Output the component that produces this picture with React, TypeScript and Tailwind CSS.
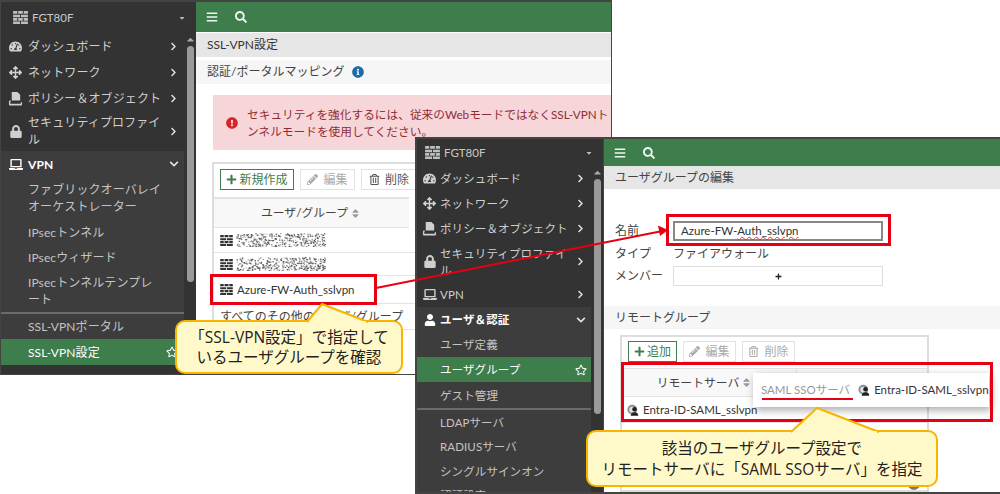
import React from "react";
import {
  FaTachometerAlt, FaArrowsAlt, FaLock, FaLaptop, FaUser, FaBars, FaSearch, FaInfoCircle,
  FaExclamationCircle, FaPlus, FaPencilAlt, FaRegTrashAlt, FaRegStar, FaChevronRight,
  FaChevronDown, FaSort, FaCaretDown, FaCaretUp,
} from "react-icons/fa";

const FONT = "font-['Lato','Noto_Sans_CJK_JP',sans-serif]";

function Wall({ className = "" }: { className?: string }) {
  return (
    <svg viewBox="0 0 16 14" className={className} fill="currentColor">
      <path d="M0 0h4.500v3H0zM5.500 0h5v3h-5zM11.500 0H16v3h-4.500zM0 4h7.500v2.600H0zM8.500 4H16v2.600H8.500zM0 7.600h4.500v2.800H0zM5.500 7.600h5v2.800h-5zM11.500 7.600H16v2.800h-4.500zM0 11.400h7.500V14H0zM8.500 11.400H16V14H8.500z" />
    </svg>
  );
}

function Policy({ className = "" }: { className?: string }) {
  return (
    <svg viewBox="0 0 16 16" className={className} fill="currentColor">
      <path d="M4 1h6l3 3v6H4z" />
      <path d="M1 11.500c0-1 .6-1.500 1.500-1.500H3v1.400h-.6v2.200h11.200V12H15v2c0 1-.6 1.500-1.500 1.500h-11C1.600 15.500 1 15 1 14z" />
    </svg>
  );
}

function RemoteServer({ className = "" }: { className?: string }) {
  return (
    <svg viewBox="0 0 16 16" className={className}>
      <circle cx="7" cy="7.500" r="6.500" fill="#8a8f94" />
      <circle cx="7" cy="7.500" r="4" fill="#dfe3e6" />
      <circle cx="10" cy="7" r="3" fill="#222" />
      <path d="M5 15.500c0-3 2-4.500 5-4.500s5 1.500 5 4.500z" fill="#222" />
    </svg>
  );
}

function Scramble({ seed }: { seed: number }) {
  const dots: React.ReactNode[] = [];
  let v = seed;
  for (let i = 0; i < 330; i++) {
    v = (v * 9301 + 49297) % 233280;
    const x = (v / 233280) * 90;
    v = (v * 9301 + 49297) % 233280;
    const y = (v / 233280) * 14;
    v = (v * 9301 + 49297) % 233280;
    const o = 0.3 + (v / 233280) * 0.7;
    dots.push(<rect key={i} x={x} y={y} width="1.400" height="1.200" fill="#444" opacity={o} />);
  }
  return (
    <svg viewBox="0 0 90 14" className="w-[90px] h-[14px]">
      {dots}
    </svg>
  );
}

type Item = {
  icon?: React.ReactNode;
  lines: string[];
  chev?: "r" | "d";
  active?: boolean;
  green?: boolean;
  star?: boolean;
  h: number;
  sep?: boolean;
  sub?: boolean;
};

function NavRow({ it, small, colW, starMr }: { it: Item; small: boolean; colW: number; starMr: number }) {
  const bg = it.green ? "bg-[#3e7d4c]" : it.sub || it.active ? "bg-[#3d3d3d]" : "";
  const color = it.green || it.active ? "text-white" : it.sub ? "text-[#c4c4c4]" : "text-[#cfcfcf]";
  return (
    <div
      className={`flex items-center shrink-0 ${bg} ${color} ${it.sep ? "border-t-2 border-[#6b6b6b]" : ""}`}
      style={{ height: it.h }}
    >
      <div className="flex justify-center items-center shrink-0 pl-[2px]" style={{ width: colW }}>
        {it.icon}
      </div>
      <div
        className={`flex-1 ${small ? "text-[11.5px]" : "text-[12px]"} leading-[17px] tracking-[0.1px] whitespace-nowrap ${it.active ? "font-bold" : ""}`}
      >
        {it.lines.map((l) => (
          <div key={l}>{l}</div>
        ))}
      </div>
      {it.chev === "r" && <FaChevronRight className="w-[9px] h-[9px] mr-[6px] text-[#e4e4e4]" />}
      {it.chev === "d" && <FaChevronDown className="w-[10px] h-[10px] mr-[5px] text-[#e4e4e4]" />}
      {it.star && <FaRegStar className="w-[12px] h-[12px] text-white" style={{ marginRight: starMr }} />}
    </div>
  );
}

function Sidebar({
  items, width, listW, headH, thumbH, small, colW, starMr, headPl,
}: {
  items: Item[]; width: number; listW: number; headH: number; thumbH: number; small: boolean;
  colW: number; starMr: number; headPl: number;
}) {
  return (
    <div className="bg-[#333333] flex flex-col shrink-0 h-full overflow-hidden" style={{ width }}>
      <div className="flex items-center shrink-0 pr-[10px] text-[#c9c9c9]" style={{ height: headH, paddingLeft: headPl }}>
        <Wall className="w-[15px] h-[13px] text-[#bdbdbd]" />
        <span className="ml-[4px] text-[11.5px] flex-1">FGT80F</span>
        <FaCaretDown className="w-[8px] h-[8px] text-[#bbb]" />
      </div>
      <div className="flex flex-1 min-h-0">
        <div className="flex flex-col shrink-0 overflow-hidden" style={{ width: listW }}>
          {items.map((it) => (
            <NavRow key={it.lines[0]} it={it} small={small} colW={colW} starMr={starMr} />
          ))}
        </div>
        <div className="flex-1 flex flex-col items-center">
          <FaCaretUp className="w-[11px] h-[11px] text-[#a8a8a8] mt-[1px]" />
          <div className="w-[7px] rounded-[4px] bg-[#9a9a9a] mt-[1px]" style={{ height: thumbH }} />
        </div>
      </div>
    </div>
  );
}

function ToolBtn({ icon, label, green, w, dim }: { icon: React.ReactNode; label: string; green?: boolean; w: number; dim?: boolean }) {
  return (
    <div
      className={`h-[21px] flex items-center justify-center gap-[2px] text-[12px] border ${
        green ? "border-[#3e7d4c] text-[#3e7d4c]" : "border-[#e2e2e2]"
      } ${dim ? "text-[#aaa]" : green ? "" : "text-[#555]"}`}
      style={{ width: w }}
    >
      {icon}
      <span className={green ? "" : "ml-[3px]"}>{label}</span>
    </div>
  );
}

const small = "w-[11px] h-[11px]";

const nav1: Item[] = [
  { icon: <FaTachometerAlt className="w-[13px] h-[13px]" />, lines: ["ダッシュボード"], chev: "r", h: 26 },
  { icon: <FaArrowsAlt className="w-[13px] h-[13px]" />, lines: ["ネットワーク"], chev: "r", h: 26 },
  { icon: <Policy className="w-[15px] h-[15px]" />, lines: ["ポリシー＆オブジェクト"], chev: "r", h: 26 },
  { icon: <FaLock className="w-[12px] h-[13px]" />, lines: ["セキュリティプロファイ", "ル"], chev: "r", h: 40 },
  { icon: <FaLaptop className="w-[14px] h-[13px]" />, lines: ["VPN"], chev: "d", active: true, h: 26 },
  { lines: ["ファブリックオーバレイ", "オーケストレーター"], sub: true, h: 42 },
  { lines: ["IPsecトンネル"], sub: true, h: 26 },
  { lines: ["IPsecウィザード"], sub: true, h: 25 },
  { lines: ["IPsecトンネルテンプレ", "ート"], sub: true, h: 42 },
  { lines: ["SSL-VPNポータル"], sub: true, sep: true, h: 27 },
  { lines: ["SSL-VPN設定"], green: true, star: true, h: 26 },
];

const nav2: Item[] = [
  { icon: <FaTachometerAlt className="w-[13px] h-[13px]" />, lines: ["ダッシュボード"], chev: "r", h: 25 },
  { icon: <FaArrowsAlt className="w-[13px] h-[13px]" />, lines: ["ネットワーク"], chev: "r", h: 25 },
  { icon: <Policy className="w-[15px] h-[15px]" />, lines: ["ポリシー＆オブジェクト"], chev: "r", h: 25 },
  { icon: <FaLock className="w-[12px] h-[13px]" />, lines: ["セキュリティプロファイ", "ル"], chev: "r", h: 41 },
  { icon: <FaLaptop className="w-[14px] h-[13px]" />, lines: ["VPN"], chev: "r", h: 25 },
  { icon: <FaUser className="w-[12px] h-[12px]" />, lines: ["ユーザ＆認証"], chev: "d", active: true, h: 25 },
  { lines: ["ユーザ定義"], sub: true, h: 25 },
  { lines: ["ユーザグループ"], green: true, star: true, h: 25 },
  { lines: ["ゲスト管理"], sub: true, h: 26 },
  { lines: ["LDAPサーバ"], sub: true, sep: true, h: 26 },
  { lines: ["RADIUSサーバ"], sub: true, h: 25 },
  { lines: ["シングルサインオン"], sub: true, h: 25 },
  { lines: ["認証設定"], sub: true, h: 22 },
];

function GreenBar({ h }: { h: number }) {
  return (
    <div className="bg-[#3e7d4c] shrink-0 flex items-center pl-[10px] gap-[17px] text-[#eef5ef]" style={{ height: h }}>
      <FaBars className="w-[12px] h-[12px]" />
      <FaSearch className="w-[12px] h-[12px]" />
    </div>
  );
}

function Window1() {
  return (
    <div className="absolute left-0 top-0 w-[612px] h-[375px] border-t-2 border-r border-b border-l border-[#444] flex overflow-hidden bg-white">
      <Sidebar items={nav1} width={195} listW={183} headH={31} thumbH={236} small={false} colW={27} starMr={6} headPl={12} />
      <div className="flex-1 flex flex-col min-w-0">
        <GreenBar h={30} />
        <div className="h-[24px] mt-[1px] shrink-0 bg-[#e6e6e6] flex items-center pl-[11px] text-[12px] text-[#333]">SSL-VPN設定</div>
        <div className="h-[24px] mt-[3px] shrink-0 bg-[#f6f6f6] flex items-center pl-[11px] text-[12px] text-[#444]">
          認証/ポータルマッピング
          <FaInfoCircle className="w-[12px] h-[12px] ml-[8px] text-[#1c6aa8]" />
        </div>
        <div className="ml-[17px] mt-[11px] h-[55px] shrink-0 bg-[#f7d6da] flex items-center text-[#8f2c37]">
          <FaExclamationCircle className="w-[12px] h-[12px] ml-[13px] text-[#d8232a] shrink-0" />
          <div className="ml-[9px] text-[11.7px] leading-[16.500px] whitespace-nowrap">
            <div>セキュリティを強化するには、従来のWebモードではなくSSL-VPNト</div>
            <div>ンネルモードを使用してください。</div>
          </div>
        </div>
        <div className="ml-[16px] mt-[12px] flex-1 border-2 border-[#ddd] border-b-0 flex flex-col">
          <div className="flex gap-[6px] pl-[6px] pt-[5px] h-[33px] shrink-0 items-start">
            <ToolBtn w={74} green icon={<FaPlus className={small} />} label="新規作成" />
            <ToolBtn w={55} dim icon={<FaPencilAlt className={small} />} label="編集" />
            <ToolBtn w={56} icon={<FaRegTrashAlt className={small} />} label="削除" />
          </div>
          <div className="h-[31px] shrink-0 border-t-2 border-b border-[#e3e3e3] bg-[#f8f8f8] flex items-center justify-center pr-[2px] text-[11.8px] text-[#444] gap-[3px] w-[195px]">
            ユーザ/グループ
            <FaSort className="w-[9px] h-[11px] text-[#999]" />
          </div>
          <div className="h-[25px] shrink-0 border-b border-[#e3e3e3] flex items-center pl-[6px] gap-[3px]">
            <Wall className="w-[13px] h-[11px] text-[#333]" />
            <Scramble seed={17} />
          </div>
          <div className="h-[23px] shrink-0 border-b border-[#e3e3e3] flex items-center pl-[6px] gap-[3px]">
            <Wall className="w-[13px] h-[11px] text-[#333]" />
            <Scramble seed={921} />
          </div>
          <div className="h-[28px] shrink-0 border-b border-[#e3e3e3] flex items-center pl-[6px] gap-[4px] text-[11.5px] text-[#333]">
            <Wall className="w-[13px] h-[11px] text-[#333]" />
            Azure-FW-Auth_sslvpn
          </div>
          <div className="h-[26px] shrink-0 border-b border-[#e3e3e3] flex items-center pl-[6px] text-[12px] text-[#444]">
            すべてのその他のユーザ/グループ
          </div>
        </div>
      </div>
    </div>
  );
}

function Window2() {
  return (
    <div className="absolute left-[415px] top-[137px] w-[586px] h-[357px] border-t-2 border-l-2 border-b-2 border-[#444] flex overflow-hidden bg-white">
      <Sidebar items={nav2} width={186} listW={174} headH={27} thumbH={235} small colW={23} starMr={4} headPl={8} />
      <div className="flex-1 flex flex-col min-w-0 border-l border-[#444]">
        <GreenBar h={27} />
        <div className="h-[23px] shrink-0 bg-[#e6e6e6] flex items-center pl-[11px] text-[12px] text-[#444]">ユーザグループの編集</div>
        <div className="flex flex-col pl-[11px] mt-[32px] gap-[2px] text-[12px] text-[#444]">
          <div className="flex items-center h-[20px]">
            <span className="w-[58px]">名前</span>
            <div className="w-[210px] h-[20px] border-2 border-[#888] flex items-center pl-[6px] text-[11.5px] text-[#333]">
              Azure-FW-
              <span className="underline decoration-wavy decoration-[#e33] decoration-1">Auth_sslvpn</span>
            </div>
          </div>
          <div className="flex items-center h-[21px]">
            <span className="w-[58px]">タイプ</span>
            <span>ファイアウォール</span>
          </div>
          <div className="flex items-center h-[20px]">
            <span className="w-[58px]">メンバー</span>
            <div className="w-[210px] h-[20px] border border-[#ddd] flex items-center justify-center">
              <FaPlus className="w-[7px] h-[7px] text-[#222]" />
            </div>
          </div>
        </div>
        <div className="h-[23px] mt-[20px] shrink-0 bg-[#f6f6f6] flex items-center pl-[11px] text-[12px] text-[#444]">リモートグループ</div>
        <div className="ml-[16px] mt-[6px] w-[309px] flex-1 border-2 border-[#ddd] flex flex-col">
          <div className="flex gap-[6px] pl-[6px] pt-[4px] h-[31px] shrink-0 items-start">
            <ToolBtn w={49} green icon={<FaPlus className={small} />} label="追加" />
            <ToolBtn w={53} dim icon={<FaPencilAlt className={small} />} label="編集" />
            <ToolBtn w={53} dim icon={<FaRegTrashAlt className={small} />} label="削除" />
          </div>
          <div className="h-[29px] shrink-0 border-t border-b border-[#e3e3e3] bg-[#f8f8f8] flex">
            <div className="w-[175px] border-r border-[#e3e3e3] flex items-center justify-center gap-[3px] pr-[10px] text-[11.8px] text-[#444]">
              リモートサーバ
              <FaSort className="w-[9px] h-[11px] text-[#999]" />
            </div>
          </div>
          <div className="h-[26px] shrink-0 border-b border-[#e3e3e3] flex items-center pl-[5px] gap-[4px] text-[11.5px] text-[#333]">
            <RemoteServer className="w-[12px] h-[12px]" />
            Entra-ID-SAML_sslvpn
          </div>
          <div className="flex-1 relative">
            <FaInfoCircle className="absolute right-[6px] bottom-[0px] w-[14px] h-[14px] text-[#777]" />
          </div>
        </div>
      </div>
    </div>
  );
}

function Popup() {
  return (
    <div className="absolute left-[753px] top-[373px] w-[236px] h-[34px] bg-white shadow-[2px_3px_8px_rgba(0,0,0,0.35)] flex items-center pl-[8px] text-[11.5px] gap-[8px] whitespace-nowrap">
      <span className="text-[#999] relative shrink-0">
        SAML SSOサーバ
        <span className="absolute left-[1px] right-[-3px] top-[17px] h-[2px] bg-[#e60012]" />
      </span>
      <span className="flex items-center gap-[4px] text-[#333] shrink-0">
        <RemoteServer className="w-[12px] h-[12px]" />
        Entra-ID-SAML_sslvpn
      </span>
    </div>
  );
}

function Callout({ left, top, w, h, lines }: { left: number; top: number; w: number; h: number; lines: string[] }) {
  return (
    <div
      className="absolute bg-[#fff9c9] border-2 border-[#f7b500] rounded-[10px] flex flex-col items-center justify-center text-[15.5px] leading-[20.500px] text-[#222] font-['Open_Sans','Noto_Sans_CJK_JP',sans-serif] whitespace-nowrap"
      style={{ left, top, width: w, height: h }}
    >
      {lines.map((l) => (
        <div key={l}>{l}</div>
      ))}
    </div>
  );
}

export default function App() {
  return (
    <div className={`relative w-[1000px] h-[494px] bg-white overflow-hidden ${FONT}`}>
      <Window1 />
      <Window2 />
      <Popup />
      <div className="absolute left-[210px] top-[274px] w-[167px] h-[31px] border-[3px] border-[#e60012]" />
      <div className="absolute left-[666px] top-[214px] w-[225px] h-[32px] border-[3px] border-[#e60012]" />
      <div className="absolute left-[621px] top-[362px] w-[372px] h-[60px] border-[3px] border-[#e60012]" />
      <svg className="absolute left-0 top-0 w-[1000px] h-[494px] pointer-events-none" viewBox="0 0 1000 494">
        <line x1="376" y1="288" x2="660" y2="231.500" stroke="#e60012" strokeWidth="2" />
        <path d="M668 230 L658 225.500 L660 236 Z" fill="#e60012" />
      </svg>
      <Callout left={175} top={320} w={228} h={54} lines={["「SSL-VPN設定」で指定して", "いるユーザグループを確認"]} />
      <Callout left={586} top={430} w={352} h={57} lines={["該当のユーザグループ設定で", "リモートサーバに「SAML SSOサーバ」を指定"]} />
      <svg className="absolute left-0 top-0 w-[1000px] h-[494px] pointer-events-none" viewBox="0 0 1000 494">
        <path d="M307 322 L322 304 L368 322" fill="#fff9c9" stroke="#f7b500" strokeWidth="2" strokeLinejoin="round" />
        <path d="M309 322.500 H366" stroke="#fff9c9" strokeWidth="2.500" />
        <path d="M791 432 L817 408 L879 432" fill="#fff9c9" stroke="#f7b500" strokeWidth="2" strokeLinejoin="round" />
        <path d="M793 432.500 H877" stroke="#fff9c9" strokeWidth="2.500" />
      </svg>
    </div>
  );
}
